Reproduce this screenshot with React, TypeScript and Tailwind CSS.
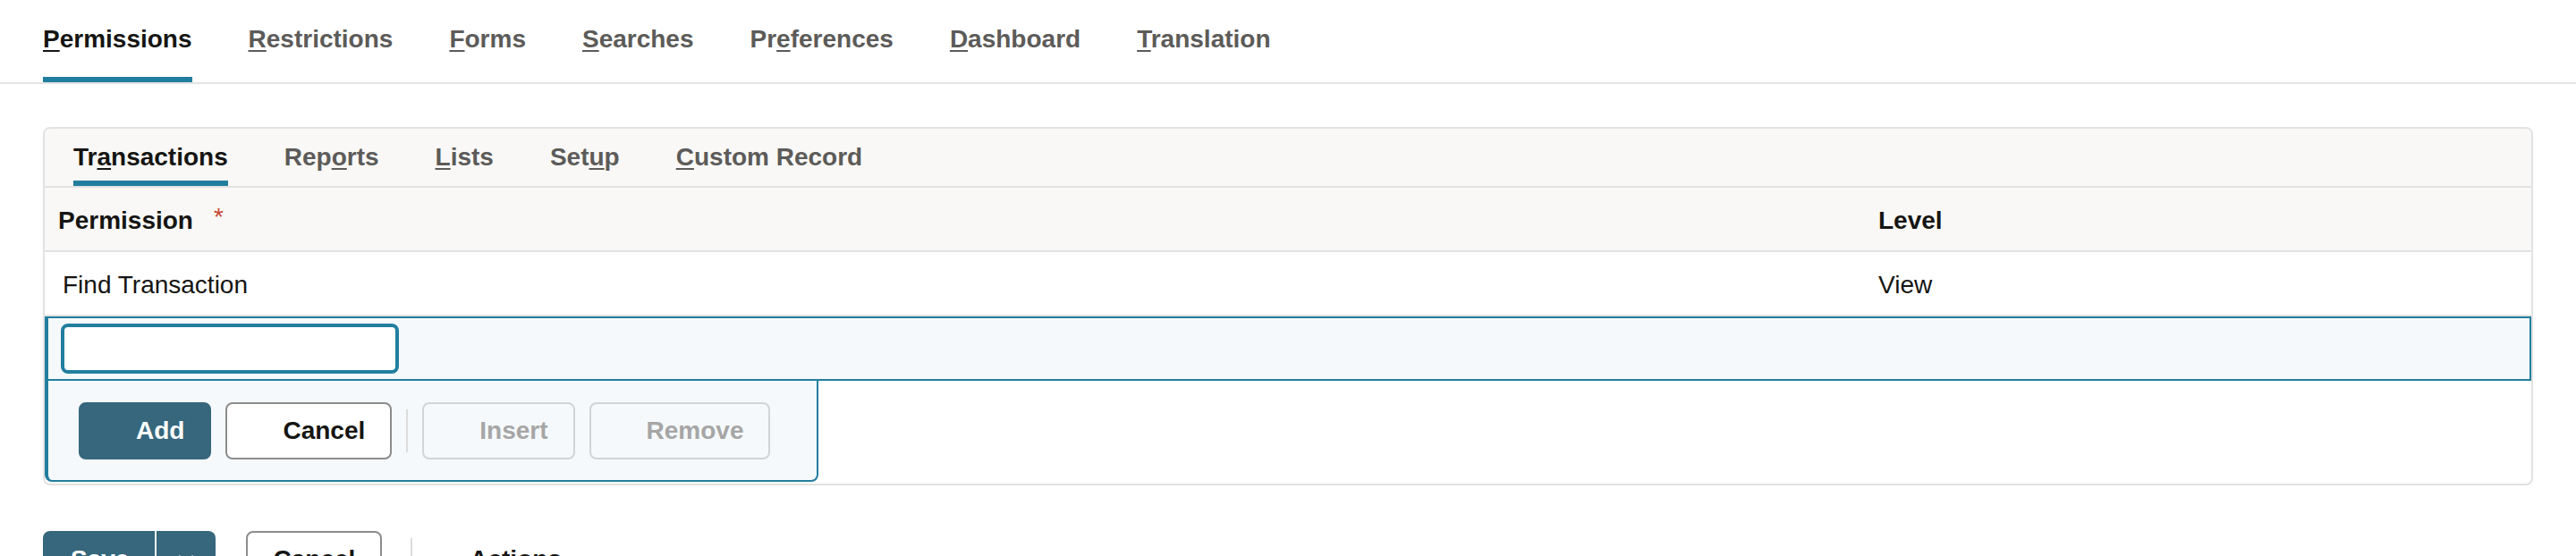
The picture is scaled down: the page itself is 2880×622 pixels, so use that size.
import React from 'react';

type TabItem = { label: string; key: number };

const MAIN_TABS: TabItem[] = [
  { label: 'Permissions', key: 0 },
  { label: 'Restrictions', key: 0 },
  { label: 'Forms', key: 0 },
  { label: 'Searches', key: 0 },
  { label: 'Preferences', key: 2 },
  { label: 'Dashboard', key: 0 },
  { label: 'Translation', key: 0 },
];

const SUB_TABS: TabItem[] = [
  { label: 'Transactions', key: 2 },
  { label: 'Reports', key: 3 },
  { label: 'Lists', key: 0 },
  { label: 'Setup', key: 3 },
  { label: 'Custom Record', key: 0 },
];

// underline the access-key letter
function Mnemonic({ label, index }: { label: string; index: number }) {
  return (
    <>
      {label.slice(0, index)}
      <span className="underline decoration-2 underline-offset-[3px]">{label[index]}</span>
      {label.slice(index + 1)}
    </>
  );
}

function Tab({ item, active, gapTop }: { item: TabItem; active: boolean; gapTop: string }) {
  return (
    <div className="flex flex-col">
      <span
        className={`text-[28px] leading-[36px] font-bold whitespace-nowrap ${
          active ? 'text-[#161513]' : 'text-[#5c5b59]'
        }`}
      >
        <Mnemonic label={item.label} index={item.key} />
      </span>
      <div className={`${gapTop} h-[6px] ${active ? 'bg-[#227e9e]' : 'bg-transparent'}`} />
    </div>
  );
}

function RowButton({ label, variant }: { label: string; variant: 'primary' | 'outline' | 'disabled' }) {
  const styles = {
    primary: 'bg-[#36677d] border-[#36677d] text-white',
    outline: 'bg-white border-[#8c8c8c] text-[#161513]',
    disabled: 'bg-transparent border-[#d2d4d5] text-[#a6a6a6]',
  }[variant];
  return (
    <button
      type="button"
      className={`h-[64px] rounded-[8px] border-2 pl-[62px] pr-[28px] text-[28px] font-bold leading-none ${styles}`}
    >
      {label}
    </button>
  );
}

export default function App() {
  return (
    <div className="min-h-screen bg-white font-['Liberation_Sans',Arial,sans-serif] text-[#161513]">
      {/* Main tabs */}
      <nav className="flex gap-[63px] border-b-2 border-[#e4e4e4] px-[48px] pt-[26px]">
        {MAIN_TABS.map((t, i) => (
          <Tab key={t.label} item={t} active={i === 0} gapTop="mt-[24px]" />
        ))}
      </nav>

      <div className="px-[48px] pt-[48px]">
        <div className="rounded-[8px] border-2 border-[#e2e2e2] pb-[2px]">
          {/* Sub tabs */}
          <div className="flex gap-[63px] rounded-t-[6px] border-b-2 border-[#e2e2e2] bg-[#f9f8f6] pl-[32px] pt-[14px]">
            {SUB_TABS.map((t, i) => (
              <Tab key={t.label} item={t} active={i === 0} gapTop="mt-[8px]" />
            ))}
          </div>

          {/* Header */}
          <div className="grid h-[72px] grid-cols-[2030px_1fr] items-center border-b-2 border-[#e2e2e2] bg-[#f9f8f6] pt-[3px] text-[28px] font-bold">
            <div className="flex items-start pl-[15px]">
              <span>Permission</span>
              <span className="ml-[23px] font-normal leading-[34px] text-[#c74634]">*</span>
            </div>
            <div className="pl-[20px]">Level</div>
          </div>

          {/* Existing row */}
          <div className="grid h-[72px] grid-cols-[2030px_1fr] items-center border-b-2 border-[#e2e2e2] pt-[3px] text-[28px]">
            <div className="pl-[20px]">Find Transaction</div>
            <div className="pl-[20px]">View</div>
          </div>

          {/* Edit row */}
          <div className="flex h-[72px] items-center border-2 border-l-4 border-[#227e9e] bg-[#f5f9fb] pl-[14px]">
            <input
              type="text"
              className="h-[56px] w-[378px] rounded-[8px] border-4 border-[#227e9e] bg-white px-[12px] text-[28px] outline-none"
            />
          </div>

          {/* Row actions */}
          <div className="flex w-[865px] items-center gap-[16px] rounded-b-[8px] border-b-2 border-l-4 border-r-2 border-[#227e9e] bg-[#f5f9fb] pb-[23px] pl-[34px] pt-[24px]">
            <RowButton label="Add" variant="primary" />
            <RowButton label="Cancel" variant="outline" />
            <div className="h-[48px] w-[2px] bg-[#dcdcdc]" />
            <RowButton label="Insert" variant="disabled" />
            <RowButton label="Remove" variant="disabled" />
          </div>
        </div>
      </div>

      {/* Page actions */}
      <div className="flex items-center px-[48px] pt-[51px]">
        <div className="flex h-[64px] overflow-hidden rounded-[8px] bg-[#36677d] text-white">
          <button type="button" className="pl-[31px] pr-[29px] text-[28px] font-bold">
            Save
          </button>
          <div className="w-[2px] bg-[#f5f9fb]" />
          <button type="button" className="flex w-[66px] items-center justify-center">
            <svg width="18" height="10" viewBox="0 0 18 10" fill="none">
              <path d="M1 1l8 8 8-8" stroke="currentColor" strokeWidth="2.5" />
            </svg>
          </button>
        </div>
        <button
          type="button"
          className="ml-[34px] h-[64px] rounded-[8px] border-2 border-[#8c8c8c] bg-white px-[28px] text-[28px] font-bold"
        >
          Cancel
        </button>
        <div className="ml-[32px] h-[48px] w-[2px] bg-[#dcdcdc]" />
        <button type="button" className="ml-[64px] text-[28px] font-bold">
          Actions
        </button>
      </div>
    </div>
  );
}
